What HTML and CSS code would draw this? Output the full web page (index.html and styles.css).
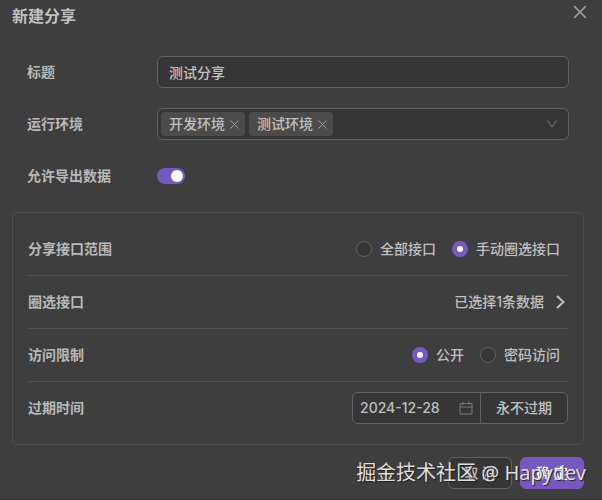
FILE: index.html
```html
<!DOCTYPE html>
<html lang="zh-CN">

<head>
    <meta charset="UTF-8">
    <meta name="viewport" content="width=device-width, initial-scale=1.0">
    <title>新建分享</title>
    <link rel="stylesheet" href="styles.css">
</head>

<body>

    <form class="dialog">
        <header class="dialog-header">
            <h2>新建分享</h2>
            <button type="button" class="close" aria-label="关闭">
                <svg width="14" height="14" viewBox="0 0 14 14"><path d="M1 1l12 12M13 1L1 13" /></svg>
            </button>
        </header>

        <div class="fields">
            <div class="form-row">
                <label for="title">标题</label>
                <input type="text" id="title" class="control" value="测试分享">
            </div>

            <div class="form-row">
                <label for="env">运行环境</label>
                <div class="select">
                    <select id="env" class="control">
                        <option value=""></option>
                        <option value="dev">开发环境</option>
                        <option value="test">测试环境</option>
                    </select>
                    <div class="tags">
                        <span class="tag">开发环境<button type="button" aria-label="移除开发环境"><svg width="9" height="9" viewBox="0 0 9 9"><path d="M.5.5l8 8M8.500.5l-8 8" /></svg></button></span>
                        <span class="tag">测试环境<button type="button" aria-label="移除测试环境"><svg width="9" height="9" viewBox="0 0 9 9"><path d="M.5.5l8 8M8.500.5l-8 8" /></svg></button></span>
                    </div>
                    <svg class="arrow" width="12" height="12" viewBox="0 0 12 12"><path d="M1.500 2.500L6 9l4.500-6.500" /></svg>
                </div>
            </div>

            <div class="form-row">
                <label for="export">允许导出数据</label>
                <input type="checkbox" id="export" class="switch" checked>
            </div>
        </div>

        <section class="panel">
            <div class="panel-row" role="radiogroup" aria-labelledby="scope-label">
                <span class="label" id="scope-label">分享接口范围</span>
                <div class="radios">
                    <label><input type="radio" name="scope" value="all">全部接口</label>
                    <label><input type="radio" name="scope" value="manual" checked>手动圈选接口</label>
                </div>
            </div>

            <div class="panel-row">
                <span class="label">圈选接口</span>
                <button type="button" class="picker">
                    已选择1条数据
                    <svg width="16" height="16" viewBox="0 0 16 16"><path d="M5 2l6.500 6L5 14" /></svg>
                </button>
            </div>

            <div class="panel-row" role="radiogroup" aria-labelledby="access-label">
                <span class="label" id="access-label">访问限制</span>
                <div class="radios">
                    <label><input type="radio" name="access" value="public" checked>公开</label>
                    <label><input type="radio" name="access" value="password">密码访问</label>
                </div>
            </div>

            <div class="panel-row">
                <label class="label" for="expire">过期时间</label>
                <div class="expire">
                    <div class="date">
                        <input type="text" id="expire" value="2024-12-28">
                        <svg width="14" height="14" viewBox="0 0 14 14"><path d="M1 2.500h12v10.500H1zM1 6h12M4 .5v3.500M10 .5v3.500" /></svg>
                    </div>
                    <button type="button">永不过期</button>
                </div>
            </div>
        </section>

        <footer class="dialog-footer">
            <button type="button" class="btn">取 消</button>
            <button type="submit" class="btn primary">确 定</button>
            <span class="watermark">掘金技术社区 @ Hapydev</span>
        </footer>
    </form>

</body>

</html>
```
FILE: styles.css
```css
* {
    box-sizing: border-box;
}

body {
    margin: 0;
    background: #3e3e3e;
    color: #c0c0c0;
    font: 500 14px/20px Inter, "Noto Sans CJK SC", sans-serif;
}

button,
input,
select {
    font: inherit;
    color: inherit;
    margin: 0;
}

button {
    padding: 0;
    border: 0;
    background: none;
    cursor: pointer;
}

svg {
    display: block;
    flex: none;
    fill: none;
    stroke: currentColor;
}

.dialog {
    min-height: 100vh;
    padding: 0 18px 10px 12px;
    border-bottom: 1px solid #343233;
}

.dialog-header {
    display: flex;
    justify-content: space-between;
    align-items: flex-start;
    height: 56px;
    padding-top: 5px;
    margin-right: -3px;
}

h2 {
    margin: 0;
    font-size: 16px;
    line-height: 22px;
    font-weight: 700;
}

.close {
    color: #a4a4a4;
}

.close svg {
    stroke-width: 1.5;
}

.fields {
    display: flex;
    flex-direction: column;
    gap: 20px;
    padding: 0 15px;
}

.form-row {
    display: grid;
    grid-template-columns: 130px 1fr;
    align-items: center;
    min-height: 32px;
}

.form-row > label,
.label {
    font-weight: 700;
    color: #b8b8b8;
}

.control {
    display: block;
    width: 100%;
    height: 32px;
    padding: 0 11px;
    border: 1px solid #606060;
    border-radius: 6px;
    background: #363636;
    outline: none;
    appearance: none;
}

.select {
    position: relative;
}

.tags {
    position: absolute;
    top: 4px;
    left: 4px;
    display: flex;
    gap: 4px;
}

.tag {
    display: flex;
    align-items: center;
    gap: 5px;
    height: 24px;
    padding: 0 6px 0 8px;
    border-radius: 4px;
    background: #4b4b4b;
}

.tag button {
    color: #999;
}

.arrow {
    position: absolute;
    top: 10px;
    right: 11px;
    color: #777;
    pointer-events: none;
}

.switch {
    display: flex;
    align-items: center;
    justify-content: flex-end;
    width: 28px;
    height: 16px;
    padding: 2px;
    border-radius: 8px;
    background: #555;
    appearance: none;
}

.switch:checked {
    background: #7658c0;
}

.switch::before {
    content: "";
    width: 12px;
    height: 12px;
    border-radius: 50%;
    background: #fff;
}

.panel {
    margin-top: 20px;
    padding: 10px 15px;
    border: 1px solid #4d4d4d;
    border-radius: 5px;
}

.panel-row {
    display: flex;
    align-items: center;
    justify-content: space-between;
    height: 53px;
    border-bottom: 1px solid #505050;
}

.panel-row:last-child {
    height: 52px;
    border-bottom: 0;
}

.radios {
    display: flex;
    gap: 16px;
    padding-right: 8px;
}

.radios label {
    display: flex;
    align-items: center;
    gap: 8px;
}

.radios input {
    width: 16px;
    height: 16px;
    border: 1px solid #606060;
    border-radius: 50%;
    background: #363636;
    appearance: none;
}

.radios input:checked {
    border: 5px solid #7658c0;
    background: #fff;
}

.picker {
    display: flex;
    align-items: center;
    gap: 8px;
}

.picker svg {
    stroke-width: 2;
}

.expire {
    display: flex;
    height: 32px;
    border: 1px solid #606060;
    border-radius: 6px;
    background: #363636;
}

.date {
    display: flex;
    align-items: center;
    justify-content: space-between;
    width: 128px;
    padding: 0 7px;
    border-right: 1px solid #606060;
}

.date input {
    width: 90px;
    padding: 0;
    border: 0;
    background: none;
    outline: none;
}

.date svg {
    color: #777;
}

.expire button {
    width: 86px;
}

.dialog-footer {
    position: relative;
    display: flex;
    justify-content: flex-end;
    gap: 8px;
    margin-top: 12px;
}

.btn {
    width: 64px;
    height: 32px;
    border: 1px solid #606060;
    border-radius: 6px;
    background: #363636;
}

.btn.primary {
    border-color: #7658c0;
    background: #7658c0;
    color: #fff;
}

/* site watermark, lies over the buttons */
.watermark {
    position: absolute;
    top: 0;
    right: -2px;
    font: 400 20px/32px "Noto Sans", "Noto Sans CJK SC", sans-serif;
    color: #ddd;
    text-shadow: 1px 1px 1px #222;
    white-space: nowrap;
    pointer-events: none;
}
```
